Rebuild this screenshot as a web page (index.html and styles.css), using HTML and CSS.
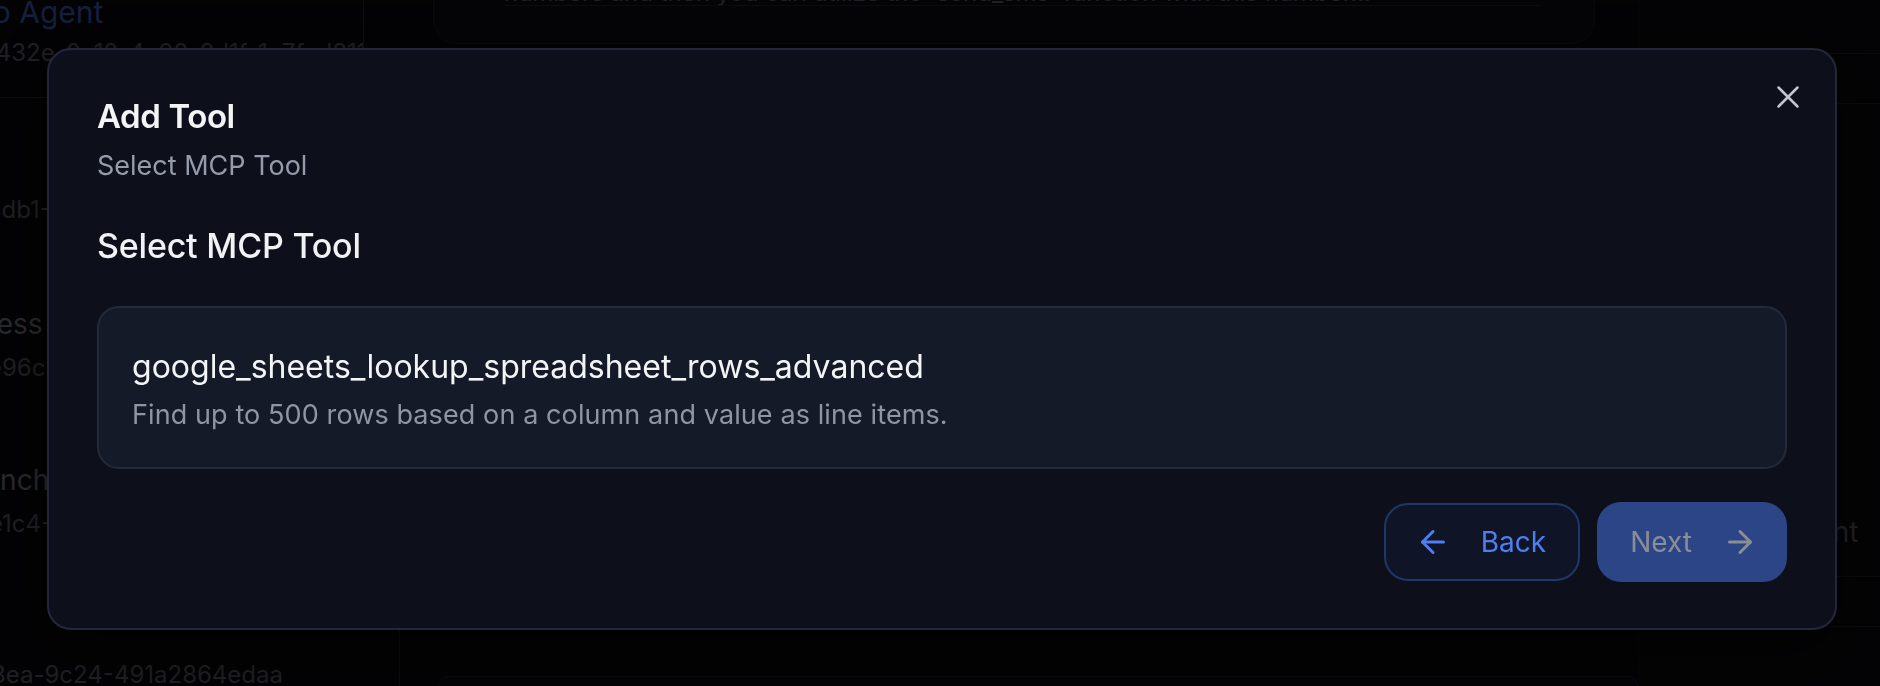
FILE: index.html
```html
<!DOCTYPE html>
<html lang="en">
<head>
<meta charset="utf-8">
<title>Add Tool</title>
<link rel="stylesheet" href="styles.css">
</head>
<body>
<div class="app">
  <aside class="sidebar">
    <div class="side-item active">
      <div class="side-title">Twilio Agent</div>
      <div class="side-id">5c1a432e-0c12-4a00-8d1f-1e7fed811</div>
    </div>
    <div class="side-item">
      <div class="side-id">9e2fadb1-7a3c-41e0-b5d2-8c11f0a9</div>
    </div>
    <div class="side-item">
      <div class="side-title">Process Automation</div>
      <div class="side-id">a710e96c-2f40-4b9a-8e13-5d6c0f21</div>
    </div>
    <div class="side-item">
      <div class="side-title">Launch Campaign</div>
      <div class="side-id">0b3fe1c4-6e72-4d85-a9c0-7f3e12b4</div>
    </div>
    <div class="side-item">
      <div class="side-id">7d2c43ea-9c24-491a2864edaa</div>
    </div>
  </aside>
  <main class="main">
    <div class="chat-card">
      <div class="chat-msg">numbers and then you can utilize the 'send_sms' function with this number..."</div>
    </div>
    <div class="chat-gap"></div>
    <div class="bottom-card"></div>
  </main>
  <aside class="rightpanel">
    <div class="rp-row"></div>
    <div class="rp-row"></div>
    <div class="rp-row tall"><span class="rp-text">Agent</span></div>
    <div class="rp-row"></div>
  </aside>
</div>

<div class="overlay">
  <div class="modal" role="dialog" aria-labelledby="modal-title">
    <button class="close" aria-label="Close">
      <svg viewBox="0 0 24 24" width="38" height="38" fill="none" stroke="currentColor" stroke-width="1.6" stroke-linecap="round" stroke-linejoin="round"><path d="M18 6 6 18"/><path d="m6 6 12 12"/></svg>
    </button>
    <h2 class="modal-title" id="modal-title">Add Tool</h2>
    <p class="modal-sub">Select MCP Tool</p>
    <h3 class="section-title">Select MCP Tool</h3>
    <div class="tool-card">
      <div class="tool-name">google_sheets_lookup_spreadsheet_rows_advanced</div>
      <div class="tool-desc">Find up to 500 rows based on a column and value as line items.</div>
    </div>
    <div class="footer">
      <button class="btn btn-back">
        <svg viewBox="0 0 24 24" width="36" height="36" fill="none" stroke="currentColor" stroke-width="2" stroke-linecap="round" stroke-linejoin="round"><path d="m12 19-7-7 7-7"/><path d="M19 12H5"/></svg>
        <span>Back</span>
      </button>
      <button class="btn btn-next">
        <span>Next</span>
        <svg viewBox="0 0 24 24" width="36" height="36" fill="none" stroke="currentColor" stroke-width="2" stroke-linecap="round" stroke-linejoin="round"><path d="M5 12h14"/><path d="m12 5 7 7-7 7"/></svg>
      </button>
    </div>
  </div>
</div>
</body>
</html>
```

FILE: styles.css
```css
* { box-sizing: border-box; }

html, body {
  margin: 0;
  padding: 0;
  width: 1880px;
  height: 686px;
  overflow: hidden;
  background: #040406;
  font-family: Inter, "Liberation Sans", sans-serif;
}

/* ---------- background app (dimmed) ---------- */
.app {
  display: flex;
  height: 686px;
}

.sidebar {
  width: 400px;
  flex: none;
  overflow: hidden;
}

.side-item {
  margin-left: -64px;
  height: 156px;
  padding-top: 44px;
  border-right: 1px solid #0e0f12;
  white-space: nowrap;
  overflow: hidden;
}

.side-item:nth-child(1) {
  margin-top: -6px;
  margin-right: 36px;
  height: 104px;
  padding-top: 0;
  border-bottom: 1px solid #111216;
  border-right-color: #111216;
}

.side-item:nth-child(1) .side-title { margin-left: -7px; }
.side-item:nth-child(1) .side-id { margin-left: 9px; margin-top: 6px; }

.side-item:nth-child(2) {
  height: 164px;
  padding-top: 95px;
}

.side-item:nth-child(4) .side-title { margin-left: 16px; }

.side-item:nth-child(5) { padding-top: 84px; }
.side-item:nth-child(5) .side-id { margin-left: -16px; }

.side-title {
  font-size: 28px;
  line-height: 36px;
  color: #37383d;
}

.side-item.active .side-title {
  color: #1c2a52;
  font-size: 30px;
}

.side-id {
  font-size: 24px;
  line-height: 34px;
  margin-top: 9px;
  color: #2a2b2f;
}

.side-item:nth-child(2) .side-id,
.side-item:nth-child(5) .side-id { margin-top: 0; }

.main {
  flex: 1;
  padding: 0 0 0 33px;
  display: flex;
  flex-direction: column;
}

.chat-card {
  width: 1162px;
  height: 44px;
  border: 1px solid #0c0d11;
  border-top: none;
  border-radius: 0 0 24px 24px;
  background: #060609;
  padding: 0 52px 0 70px;
}

.chat-msg {
  margin-top: -20px;
  font-size: 24px;
  line-height: 26px;
  color: #2b2c30;
  white-space: nowrap;
  overflow: hidden;
  border-bottom: 1px solid #101116;
  height: 26px;
}

.chat-gap { flex: 1; }

.bottom-card {
  width: 1200px;
  height: 10px;
  margin-left: 5px;
  border: 1px solid #0e0f13;
  border-bottom: none;
  border-radius: 20px 20px 0 0;
  background: #06070a;
}

.rightpanel {
  width: 252px;
  flex: none;
  border-left: 1px solid #08080a;
  background: #050507;
}

.rp-row {
  height: 50px;
  border-bottom: 1px solid #0e0f12;
}

.rp-row:first-child { height: 54px; }

.rp-row.tall {
  height: 473px;
  padding: 408px 0 0 141px;
}

.rp-text {
  font-size: 28px;
  color: #2c2d31;
  line-height: 40px;
}

/* ---------- overlay & modal ---------- */
.overlay {
  position: fixed;
  inset: 0;
  background: rgba(0, 0, 0, 0.25);
  padding: 48px 0 0 47px;
}

.modal {
  position: relative;
  width: 1790px;
  height: 582px;
  background: #0d101a;
  border: 2px solid #22273a;
  border-radius: 24px;
  padding: 46px 48px 0;
  box-shadow: 0 20px 60px rgba(0, 0, 0, 0.5);
}

.close {
  position: absolute;
  top: 28px;
  right: 28px;
  width: 38px;
  height: 38px;
  padding: 0;
  border: none;
  background: transparent;
  color: #c3c6ce;
  display: flex;
}

.modal-title {
  margin: 0;
  font-size: 33px;
  line-height: 40px;
  font-weight: 600;
  color: #f3f4f6;
  letter-spacing: -0.4px;
}

.modal-sub {
  margin: 10px 0 0;
  font-size: 27px;
  line-height: 40px;
  color: #959baa;
}

.section-title {
  margin: 38px 0 0;
  font-size: 34px;
  line-height: 44px;
  font-weight: 500;
  color: #f1f2f5;
  letter-spacing: -0.2px;
}

.tool-card {
  margin-top: 38px;
  height: 163px;
  background: #151a28;
  border: 2px solid #232a3b;
  border-radius: 22px;
  padding: 39px 33px 0;
}

.tool-name {
  font-size: 32px;
  line-height: 40px;
  color: #f3f4f6;
}

.tool-desc {
  margin-top: 8px;
  font-size: 27px;
  line-height: 40px;
  color: #8e95a3;
  letter-spacing: 0.1px;
}

.footer {
  margin-top: 33px;
  display: flex;
  justify-content: flex-end;
  align-items: center;
  gap: 17px;
}

.btn {
  display: flex;
  align-items: center;
  gap: 30px;
  font-family: inherit;
  font-size: 28px;
  line-height: 36px;
  border-radius: 24px;
  cursor: pointer;
}

.btn-back {
  height: 78px;
  padding: 0 32px 0 29px;
  background: #0f1426;
  border: 2px solid #1f3867;
  color: #4e7ef0;
}

.btn-next {
  height: 80px;
  padding: 0 29px 0 33px;
  background: #2c4586;
  border: none;
  color: #8c8e95;
}
```
